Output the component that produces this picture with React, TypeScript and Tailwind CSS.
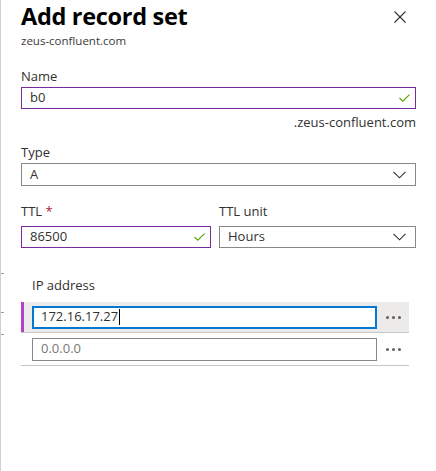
import React from 'react'

const font = { fontFamily: '"Open Sans", "Noto Sans", Arial, sans-serif' }

function Check({ className }: { className?: string }) {
  return (
    <svg width="11" height="8" viewBox="0 0 11 8" className={className}>
      <path d="M0.5 4 L3.8 7.2 L10.5 0.6" fill="none" stroke="#57a300" strokeWidth="1.1" />
    </svg>
  )
}

function Chevron() {
  return (
    <svg width="13" height="8" viewBox="0 0 13 8">
      <path d="M0.5 0.8 L6.5 6.8 L12.5 0.8" fill="none" stroke="#323130" strokeWidth="1.1" />
    </svg>
  )
}

function Dots() {
  return (
    <div className="flex w-[32px] items-center justify-center gap-[3px]">
      <span className="h-[3px] w-[3px] rounded-full bg-[#605e5c]" />
      <span className="h-[3px] w-[3px] rounded-full bg-[#605e5c]" />
      <span className="h-[3px] w-[3px] rounded-full bg-[#605e5c]" />
    </div>
  )
}

export default function App() {
  return (
    <div style={font} className="relative h-[471px] w-[436px] overflow-hidden border-l border-[#d2d0ce] bg-white text-[#323130]">
      {/* bits of the page behind the panel */}
      <div className="absolute left-0 top-[273px] h-px w-[3px] bg-[#a19f9d]" />
      <div className="absolute left-0 top-[312px] h-px w-[3px] bg-[#a19f9d]" />
      <div className="absolute left-0 top-[334px] h-px w-[3px] bg-[#a19f9d]" />

      <div className="pl-[20px] pr-[20px]">
        <div className="flex h-[30px] items-center justify-between pt-[1px]">
          <h1 className="text-[23.5px] font-bold leading-[30px] tracking-[-0.3px] text-black">Add record set</h1>
          <svg width="12" height="12" viewBox="0 0 12 12" className="mr-[10px] mt-[3px]">
            <path d="M0.5 0.5 L11.5 11.5 M11.5 0.5 L0.5 11.5" stroke="#323130" strokeWidth="1.1" />
          </svg>
        </div>
        <div className="mt-[3px] text-[11.5px] leading-[16px] text-[#3b3a39]">zeus-confluent.com</div>

        <div className="mt-[17px] text-[13px] leading-[20px]">Name</div>
        <div className="mt-[1px] flex h-[22px] items-center justify-between border border-[#7a2a9c] pl-[8px] pr-[5px] text-[13px]">
          <span>b0</span>
          <Check />
        </div>
        <div className="mt-[4px] text-right text-[13px] leading-[18px]">.zeus-confluent.com</div>

        <div className="mt-[11px] text-[13px] leading-[20px]">Type</div>
        <div className="mt-[1px] flex h-[23px] items-center justify-between border border-[#8a8886] pl-[8px] pr-[9px] text-[13px]">
          <span>A</span>
          <Chevron />
        </div>

        <div className="mt-[15px] flex gap-[8px]">
          <div className="w-[190px]">
            <div className="text-[13px] leading-[20px]">
              TTL <span className="text-[#a4262c]">*</span>
            </div>
            <div className="mt-[5px] flex h-[22px] items-center justify-between border border-[#7a2a9c] pl-[8px] pr-[5px] text-[13px]">
              <span>86500</span>
              <Check />
            </div>
          </div>
          <div className="flex-1">
            <div className="text-[13px] leading-[20px]">TTL unit</div>
            <div className="mt-[5px] flex h-[22px] items-center justify-between border border-[#8a8886] pl-[8px] pr-[9px] text-[13px]">
              <span>Hours</span>
              <Chevron />
            </div>
          </div>
        </div>

        <div className="mr-[7px] mt-[27px]">
          <div className="pl-[11px] text-[13px] leading-[20px]">IP address</div>
          <div className="mt-[7px] flex h-[31px] items-center border-b border-[#c8c6c4] bg-[#edebe9]">
            <div className="h-full w-[3px] bg-[#b53fcb]" />
            <div className="ml-[8px] flex h-[23px] w-[345px] items-center border-2 border-[#0078d4] bg-white pl-[7px] text-[13px]">
              <span>172.16.17.27</span>
              <span className="ml-px h-[16px] w-px bg-black" />
            </div>
            <Dots />
          </div>
          <div className="flex h-[33px] items-center border-b border-[#c8c6c4]">
            <div className="ml-[11px] flex h-[23px] w-[345px] items-center border border-[#8a8886] bg-white pl-[8px] text-[13px] text-[#797775]">
              0.0.0.0
            </div>
            <Dots />
          </div>
        </div>
      </div>
    </div>
  )
}
